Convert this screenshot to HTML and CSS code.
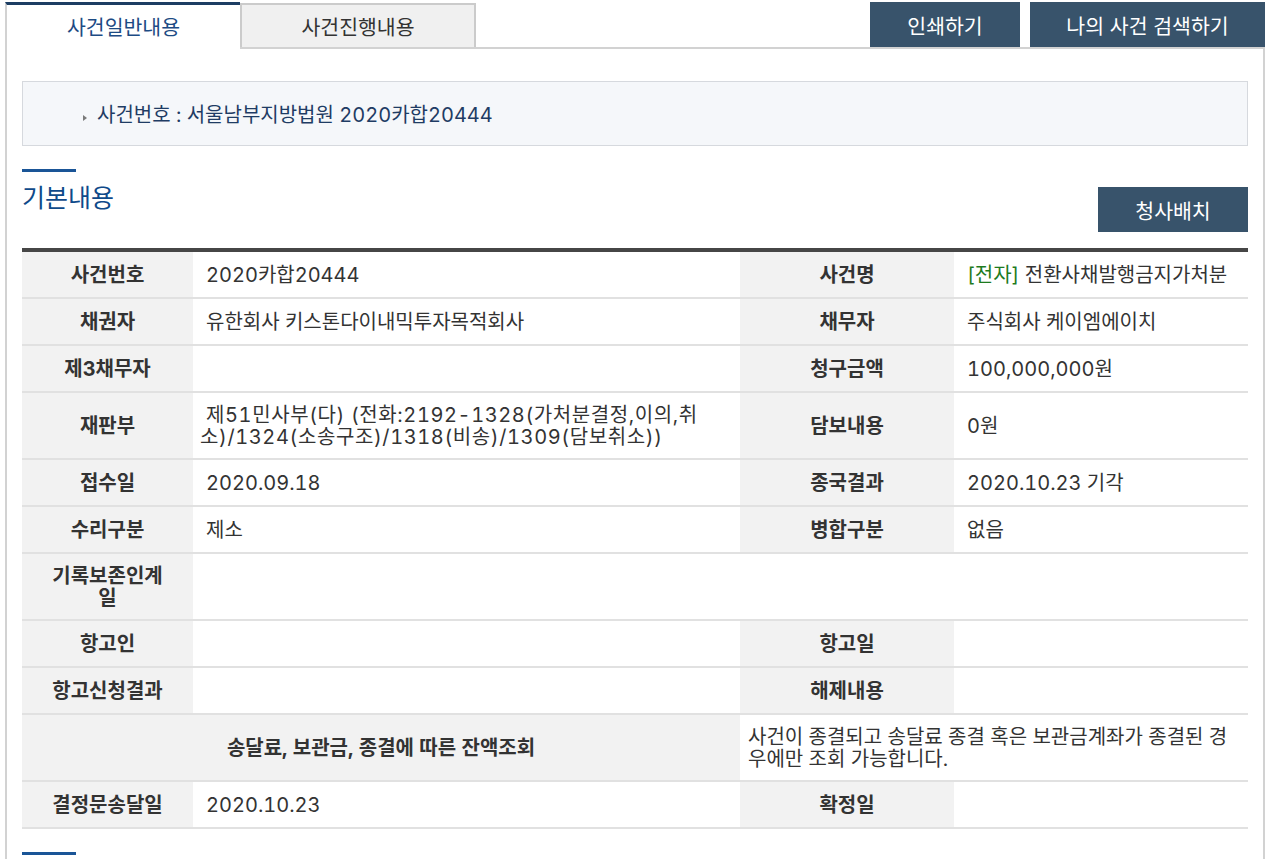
FILE: index.html
```html
<!DOCTYPE html>
<html lang="ko">
<head>
<meta charset="utf-8">
<title>사건일반내용</title>
<link rel="stylesheet" href="styles.css">
</head>
<body>
<div class="page">
  <div class="topbar">
    <div class="tabs">
      <div class="tab tab-active">사건일반내용</div>
      <div class="tab tab-idle">사건진행내용</div>
    </div>
    <div class="actions">
      <button class="btn btn-print">인쇄하기</button>
      <button class="btn btn-search">나의 사건 검색하기</button>
    </div>
  </div>
  <div class="panel">
    <div class="case-box"><span class="tri"></span>사건번호 : 서울남부지방법원 2020카합20444</div>

    <div class="sec-head">
      <div class="sec-title"><span class="bar"></span><h2>기본내용</h2></div>
      <button class="btn btn-map">청사배치</button>
    </div>

    <table class="info">
      <colgroup>
        <col class="c1"><col class="c2"><col class="c3"><col class="c4">
      </colgroup>
      <tbody>
        <tr><th>사건번호</th><td>2020카합20444</td><th>사건명</th><td><span class="e">[전자]</span> 전환사채발행금지가처분</td></tr>
        <tr><th>채권자</th><td>유한회사 키스톤다이내믹투자목적회사</td><th>채무자</th><td>주식회사 케이엠에이치</td></tr>
        <tr><th>제3채무자</th><td></td><th>청구금액</th><td>100,000,000원</td></tr>
        <tr class="two"><th>재판부</th><td class="court">제51민사부(다) (전화:2192-1328(가처분결정,이의,취<br>소)/1324(소송구조)/1318(비송)/1309(담보취소))</td><th>담보내용</th><td>0원</td></tr>
        <tr><th>접수일</th><td>2020.09.18</td><th>종국결과</th><td>2020.10.23 기각</td></tr>
        <tr><th>수리구분</th><td>제소</td><th>병합구분</th><td>없음</td></tr>
        <tr class="two"><th>기록보존인계<br>일</th><td colspan="3"></td></tr>
        <tr><th>항고인</th><td></td><th>항고일</th><td></td></tr>
        <tr><th>항고신청결과</th><td></td><th>해제내용</th><td></td></tr>
        <tr class="two"><th colspan="2">송달료, 보관금, 종결에 따른 잔액조회</th><td colspan="2" class="note">사건이 종결되고 송달료 종결 혹은 보관금계좌가 종결된 경<br>우에만 조회 가능합니다.</td></tr>
        <tr><th>결정문송달일</th><td>2020.10.23</td><th>확정일</th><td></td></tr>
      </tbody>
    </table>

    <div class="sec-head sec-next">
      <div class="sec-title"><span class="bar"></span></div>
    </div>
  </div>
</div>
</body>
</html>
```

FILE: styles.css
```css
html, body {
  margin: 0;
  padding: 0;
  background: #ffffff;
}

body {
  font-family: Inter, "Noto Sans CJK KR", sans-serif;
  font-feature-settings: "tnum" 1;
  color: #333333;
}

.page {
  width: 1260px;
  padding: 2px 0 0 5px;
}

/* top bar */
.topbar {
  display: flex;
  align-items: flex-end;
  height: 45px;
}

.tabs {
  display: flex;
  align-items: flex-end;
  height: 100%;
}

.tab {
  box-sizing: border-box;
  display: flex;
  align-items: center;
  justify-content: center;
  font-size: 20.5px;
}

.tab-active {
  position: relative;
  z-index: 1;
  width: 235px;
  height: 47px;
  margin-bottom: -2px;
  padding-bottom: 2px;
  border-top: 3px solid #1c3d63;
  border-left: 2px solid #d2d2d2;
  background: #ffffff;
  color: #1d4b84;
}

.tab-idle {
  width: 236px;
  height: 44px;
  border: 2px solid #cbcbcb;
  border-bottom: 0;
  background: #f0f0f0;
  color: #333333;
}

.actions {
  margin-left: auto;
  display: flex;
  gap: 10px;
}

.btn {
  box-sizing: border-box;
  height: 45px;
  padding: 0;
  border: 0;
  background: #38536b;
  color: #ffffff;
  font-family: inherit;
  font-size: 20.5px;
  cursor: pointer;
}

.btn-print { width: 150px; }
.btn-search { width: 235px; }

/* panel */
.panel {
  border: 2px solid #d2d2d2;
  padding: 32px 15px 40px;
}

.case-box {
  box-sizing: border-box;
  height: 65px;
  display: flex;
  align-items: center;
  padding-left: 60px;
  border: 1px solid #d6d9de;
  background: #f5f7fa;
  font-size: 20px;
  color: #1f3c64;
}

.tri {
  width: 0;
  height: 0;
  margin: 8px 10px 0 0;
  border-left: 4px solid #7a7a7a;
  border-top: 3px solid transparent;
  border-bottom: 3px solid transparent;
}

/* section header */
.sec-head {
  display: flex;
  justify-content: space-between;
  align-items: flex-start;
  margin-top: 23px;
}

.bar {
  display: block;
  width: 54px;
  height: 3px;
  background: #1a5597;
}

.sec-title h2 {
  margin: 11px 0 0;
  font-size: 25px;
  line-height: 30px;
  font-weight: normal;
  color: #0f4a8a;
}

.btn-map {
  width: 150px;
  margin-top: 18px;
}

/* table */
.info {
  width: 100%;
  margin-top: 16px;
  border-collapse: collapse;
  table-layout: fixed;
  border-top: 4px solid #464646;
}

.c1 { width: 171px; }
.c2 { width: 547px; }
.c3 { width: 214px; }
.c4 { width: 294px; }

.info th,
.info td {
  border-bottom: 2px solid #e1e1e1;
  font-size: 20px;
  line-height: 22px;
  padding: 11.5px 4px 11.5px 13px;
  vertical-align: middle;
  text-align: left;
  color: #333333;
}

.info th {
  background: #f2f2f2;
  text-align: center;
  font-weight: bold;
  padding-left: 2px;
  padding-right: 2px;
}

.info tr.two th,
.info tr.two td {
  padding-top: 10.5px;
  padding-bottom: 10.5px;
}

.info td.court {
  padding-left: 7px;
  padding-right: 2px;
  text-indent: 6px;
  letter-spacing: 0.6px;
  white-space: nowrap;
}

.info td.note {
  padding-left: 8px;
  padding-right: 2px;
  white-space: nowrap;
}

.e {
  color: #1e7b1e;
}

.sec-next {
  margin-top: 23px;
  height: 60px;
}
```
